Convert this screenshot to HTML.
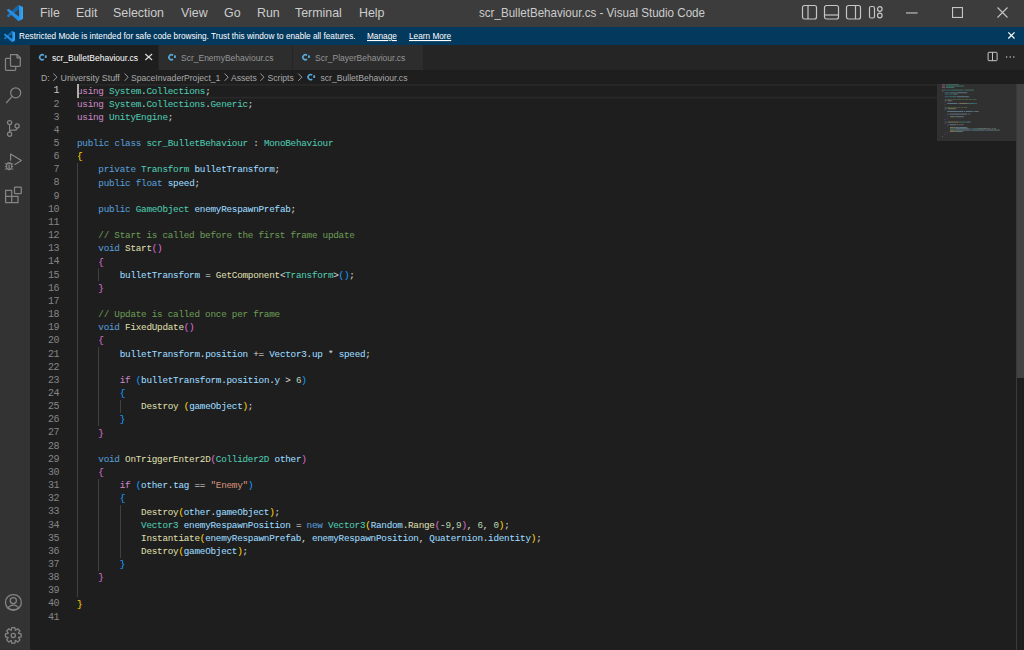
<!DOCTYPE html>
<html><head><meta charset="utf-8">
<style>
*{margin:0;padding:0;box-sizing:border-box}
html,body{width:1024px;height:650px;overflow:hidden;background:#1e1e1e;font-family:"Liberation Sans",sans-serif;position:relative}
.abs{position:absolute}
#title{left:0;top:0;width:1024px;height:27px;background:#3c3c3c}
.menu{position:absolute;top:5px;font-size:12.4px;color:#cccccc;white-space:nowrap;line-height:16px}
#banner{left:0;top:27px;width:1024px;height:18px;background:#04395e}
.btxt{position:absolute;top:29.2px;font-size:8.25px;line-height:14px;color:#ffffff;white-space:nowrap;transform-origin:0 0;transform:scaleY(1.1)}
.btxt u{text-decoration:underline}
#act{left:0;top:45px;width:30px;height:605px;background:#333333}
#tabs{left:30px;top:45px;width:994px;height:25px;background:#252526}
.tab{position:absolute;top:45px;height:25px;background:#2d2d2d}
.tabtxt{position:absolute;top:52px;font-size:8.5px;line-height:13px;white-space:nowrap}
.bc{position:absolute;top:72px;font-size:8.6px;line-height:13px;color:#a9a9a9;white-space:nowrap}
#code{-webkit-text-stroke:0.07px;position:absolute;left:77px;top:84.5px;font-family:"Liberation Mono",monospace;font-size:9.3px;letter-spacing:-0.241px;line-height:13.155px;white-space:pre;color:#d4d4d4}
.ln{position:absolute;left:30px;width:28.8px;text-align:right;font-family:"Liberation Mono",monospace;font-size:10px;letter-spacing:-0.66px;line-height:13.155px;color:#858585;white-space:pre}
.ln.act{color:#c6c6c6}
.k{color:#569cd6}.c{color:#c586c0}.t{color:#4ec9b0}.v{color:#9cdcfe}.f{color:#dcdcaa}.m{color:#6a9955}.s{color:#ce9178}.n{color:#b5cea8}
.b1{color:#ffd700}.b2{color:#da70d6}.b3{color:#179fff}
.guide{position:absolute;width:1px;background:#404040}
svg{position:absolute;overflow:visible}
.ai{fill:none;stroke:#858585;stroke-width:1.25;stroke-linejoin:round}
</style></head><body>
<div id="title" class="abs"></div>
<svg style="left:7px;top:4.6px" width="16" height="16" viewBox="0 0 100 100"><defs><linearGradient id="lg" x1="0" y1="0" x2="1" y2="0"><stop offset="0" stop-color="#2a8ee0"/><stop offset="0.7" stop-color="#1f8ee6"/><stop offset="1" stop-color="#3aa6f2"/></linearGradient></defs><path fill="url(#lg)" d="M96.46 10.8L75.86.87a6.23 6.23 0 0 0-7.1 1.2L29.35 38.04 12.19 25.01a4.16 4.16 0 0 0-5.32.24L1.36 30.26a4.16 4.16 0 0 0 0 6.16L16.25 50 1.36 63.58a4.16 4.16 0 0 0 0 6.16l5.51 5.01a4.16 4.16 0 0 0 5.32.24l17.16-13.03 39.41 35.97a6.23 6.23 0 0 0 7.1 1.2l20.6-9.92a6.25 6.25 0 0 0 3.54-5.63V16.43a6.25 6.25 0 0 0-3.54-5.63zM75.01 72.7L45.11 50l29.9-22.7v45.4z"/><path fill="#000" opacity="0.28" d="M29.35 38.04L68.76 2.07L75.01 0.9V27.3L45.11 50z"/><path fill="#000" opacity="0.18" d="M16.25 50L29.35 61.96L12.19 74.99L1.36 69.74V63.58z"/></svg>
<div class="menu" style="left:40px">File</div>
<div class="menu" style="left:76px">Edit</div>
<div class="menu" style="left:113px">Selection</div>
<div class="menu" style="left:181px">View</div>
<div class="menu" style="left:224px">Go</div>
<div class="menu" style="left:257px">Run</div>
<div class="menu" style="left:295px">Terminal</div>
<div class="menu" style="left:359px">Help</div>
<div class="menu" style="left:479px;font-size:11.6px;transform:scaleY(1.18);transform-origin:0 11.75px">scr_BulletBehaviour.cs - Visual Studio Code</div>
<svg style="left:802px;top:5.2px" width="15" height="15" viewBox="0 0 15 15" fill="none" stroke="#c5c5c5" stroke-width="1.2"><rect x="0.5" y="0.5" width="14" height="13.5" rx="2"/><line x1="6" y1="0.5" x2="6" y2="14"/></svg>
<svg style="left:824px;top:5.2px" width="15" height="15" viewBox="0 0 15 15" fill="none" stroke="#c5c5c5" stroke-width="1.2"><rect x="0.5" y="0.5" width="14" height="13.5" rx="2"/><line x1="0.5" y1="10" x2="14.5" y2="10"/></svg>
<svg style="left:846px;top:5.2px" width="15" height="15" viewBox="0 0 15 15" fill="none" stroke="#c5c5c5" stroke-width="1.2"><rect x="0.5" y="0.5" width="14" height="13.5" rx="2"/><line x1="9.5" y1="0.5" x2="9.5" y2="14"/></svg>
<svg style="left:869px;top:6.3px" width="15" height="13" viewBox="0 0 15 13" fill="none" stroke="#c5c5c5" stroke-width="1.2"><rect x="0.5" y="0.5" width="5" height="11.5" rx="1.5"/><circle cx="10.8" cy="3" r="2.3"/><circle cx="10.8" cy="9.5" r="2.3"/></svg>
<svg style="left:906px;top:12.4px" width="12" height="2" viewBox="0 0 12 2"><rect x="0" y="0.4" width="11.6" height="1.1" fill="#c5c5c5"/></svg>
<svg style="left:952px;top:7px" width="11" height="11" viewBox="0 0 11 11" fill="none" stroke="#c5c5c5" stroke-width="1.1"><rect x="0.55" y="0.55" width="9.9" height="9.9"/></svg>
<svg style="left:997.3px;top:7px" width="11" height="11" viewBox="0 0 11 11" fill="none" stroke="#c5c5c5" stroke-width="1.1"><path d="M0.5 0.5L10.5 10.5M10.5 0.5L0.5 10.5"/></svg>

<div id="banner" class="abs"></div>
<svg style="left:4px;top:31px" width="11" height="11" viewBox="0 0 100 100"><path fill="url(#lg)" d="M96.46 10.8L75.86.87a6.23 6.23 0 0 0-7.1 1.2L29.35 38.04 12.19 25.01a4.16 4.16 0 0 0-5.32.24L1.36 30.26a4.16 4.16 0 0 0 0 6.16L16.25 50 1.36 63.58a4.16 4.16 0 0 0 0 6.16l5.51 5.01a4.16 4.16 0 0 0 5.32.24l17.16-13.03 39.41 35.97a6.23 6.23 0 0 0 7.1 1.2l20.6-9.92a6.25 6.25 0 0 0 3.54-5.63V16.43a6.25 6.25 0 0 0-3.54-5.63zM75.01 72.7L45.11 50l29.9-22.7v45.4z"/><path fill="#000" opacity="0.28" d="M29.35 38.04L68.76 2.07L75.01 0.9V27.3L45.11 50z"/><path fill="#000" opacity="0.18" d="M16.25 50L29.35 61.96L12.19 74.99L1.36 69.74V63.58z"/></svg>
<div class="btxt" style="left:19px">Restricted Mode is intended for safe code browsing. Trust this window to enable all features.</div>
<div class="btxt" style="left:367px"><u>Manage</u></div>
<div class="btxt" style="left:409px"><u>Learn More</u></div>
<svg style="left:1008.3px;top:32.2px" width="7" height="7" viewBox="0 0 7 7" fill="none" stroke="#ffffff" stroke-width="1.15"><path d="M0.3 0.3L6.5 6.5M6.5 0.3L0.3 6.5"/></svg>

<div id="act" class="abs"></div>
<!-- explorer -->
<svg style="left:0;top:0" width="30" height="650" class="ai">
<path d="M10.5 54.5h6.5l3.3 3.3v7.7a0.8 0.8 0 0 1-0.8 0.8h-8.2a0.8 0.8 0 0 1-0.8-0.8z"/>
<path d="M17 54.5v3.3h3.3"/>
<path d="M10.7 58.3h-4.4a0.8 0.8 0 0 0-0.8 0.8v10.4a0.8 0.8 0 0 0 0.8 0.8h8.6a0.8 0.8 0 0 0 0.8-0.8v-3.2"/>
<!-- search -->
<circle cx="15.7" cy="92.8" r="5"/>
<path d="M12.2 96.4L6.2 103"/>
<!-- scm -->
<circle cx="9.6" cy="122.6" r="2.1"/>
<circle cx="17.1" cy="125.9" r="2.1"/>
<circle cx="9.6" cy="134.2" r="2.1"/>
<path d="M9.6 124.7v7.4"/>
<path d="M17.1 128c0 1.5-1 2.2-2.4 2.2h-2.6c-1.6 0-2.5 0.8-2.5 2"/>
<!-- run debug -->
<path d="M10.6 160.8V154L21.4 160.5L14.5 164.8"/>
<ellipse cx="9.1" cy="166.2" rx="2.6" ry="3.4"/>
<path d="M6.6 163.3h5M4.9 163.6l1.7 0.8M13.3 163.6l-1.7 0.8M4.9 166.6h1.6M11.7 166.6h1.6M4.9 169.5l1.9-1.1M13.3 169.5l-1.9-1.1" stroke-width="1"/>
<path d="M9.1 164.5v4.5" stroke-width="1.3"/>
<!-- extensions -->
<path d="M5.6 190.3h6.1v6.1h6.3v6.2h-12.4z"/>
<path d="M5.6 196.4h6.1v6.2"/>
<rect x="14.5" y="187.2" width="6.8" height="6.3" rx="0.8"/>
<!-- account -->
<circle cx="13.4" cy="602.4" r="7.9"/>
<circle cx="13.3" cy="600.6" r="3.1"/>
<path d="M7.9 608.2c1.2-2.2 3.1-3.2 5.4-3.2s4.3 1 5.4 3.2c-1.5 0.9-3.4 1.3-5.4 1.3s-3.9-0.4-5.4-1.3z"/>
<!-- gear -->
<circle cx="13.3" cy="635.4" r="2.1"/>
<path d="M18.54 633.43 L21.14 633.81 L21.14 636.99 L18.54 637.37 L18.40 637.71 L19.97 639.82 L17.72 642.07 L15.61 640.50 L15.27 640.64 L14.89 643.24 L11.71 643.24 L11.33 640.64 L10.99 640.50 L8.88 642.07 L6.63 639.82 L8.20 637.71 L8.06 637.37 L5.46 636.99 L5.46 633.81 L8.06 633.43 L8.20 633.09 L6.63 630.98 L8.88 628.73 L10.99 630.30 L11.33 630.16 L11.71 627.56 L14.89 627.56 L15.27 630.16 L15.61 630.30 L17.72 628.73 L19.97 630.98 L18.40 633.09z"/>
</svg>

<div id="tabs" class="abs"></div>
<div class="tab" style="left:30px;width:128px;background:#1e1e1e"></div>
<div class="tab" style="left:159px;width:133px"></div>
<div class="tab" style="left:293px;width:130px"></div>
<svg style="left:0;top:0" width="1024" height="90">
<g fill="none" stroke="#55a8d8" stroke-width="1.6"><path d="M43.81 55.33A2.5 2.5 0 1 0 43.81 59.17"/><path d="M173.01 55.28A2.5 2.5 0 1 0 173.01 59.12"/><path d="M307.01 55.28A2.5 2.5 0 1 0 307.01 59.12"/><path d="M312.21 75.18A2.5 2.5 0 1 0 312.21 79.02"/></g><g fill="#55a8d8"><rect x="44.80" y="55.35" width="1.9" height="2.7" rx="0.4"/><rect x="174.00" y="55.30" width="1.9" height="2.7" rx="0.4"/><rect x="308.00" y="55.30" width="1.9" height="2.7" rx="0.4"/><rect x="313.20" y="75.20" width="1.9" height="2.7" rx="0.4"/></g>
<path d="M145.3 54l6.8 6M152.1 54l-6.8 6" stroke="#dadada" stroke-width="1.15" fill="none"/>
<g fill="none" stroke="#a9a9a9" stroke-width="0.9"><path d="M53.4 73.6l3.6 3.6-3.6 3.6"/><path d="M124.6 73.6l3.6 3.6-3.6 3.6"/><path d="M224.6 73.6l3.6 3.6-3.6 3.6"/><path d="M260.4 73.6l3.6 3.6-3.6 3.6"/><path d="M298.3 73.6l3.6 3.6-3.6 3.6"/></g>
<g fill="none" stroke="#c5c5c5" stroke-width="1">
<rect x="988.1" y="52.3" width="9" height="8.4" rx="0.7"/>
<path d="M992.5 52.2v8.6"/>
</g>
<g fill="#c5c5c5">
<circle cx="1006.6" cy="57" r="0.75"/><circle cx="1010.2" cy="57" r="0.75"/><circle cx="1013.8" cy="57" r="0.75"/>
</g>
</svg>
<div class="tabtxt" style="left:52px;color:#ffffff">scr_BulletBehaviour.cs</div>
<div class="tabtxt" style="left:181px;color:#969696">Scr_EnemyBehaviour.cs</div>
<div class="tabtxt" style="left:315px;color:#969696">Scr_PlayerBehaviour.cs</div>
<div class="bc" style="left:41px">D:</div>
<div class="bc" style="left:60.5px;font-size:8.85px">University Stuff</div>
<div class="bc" style="left:131px">SpaceInvaderProject_1</div>
<div class="bc" style="left:231px">Assets</div>
<div class="bc" style="left:267.5px">Scripts</div>
<div class="bc" style="left:320.5px">scr_BulletBehaviour.cs</div>

<!-- current line -->
<svg style="left:0;top:0" width="1024" height="110"><rect x="77" y="84" width="860" height="1.8" fill="#282828"/><rect x="77" y="96.7" width="860" height="1.8" fill="#282828"/></svg>
<div class="guide" style="left:77.00px;top:162.93px;height:434.11px"></div>
<div class="guide" style="left:98.36px;top:268.17px;height:13.16px"></div>
<div class="guide" style="left:98.36px;top:347.10px;height:78.93px"></div>
<div class="guide" style="left:119.72px;top:399.72px;height:13.16px"></div>
<div class="guide" style="left:98.36px;top:478.65px;height:92.08px"></div>
<div class="guide" style="left:119.72px;top:504.96px;height:52.62px"></div>
<div class="ln act" style="top:84.40px">1</div>
<div class="ln" style="top:97.56px">2</div>
<div class="ln" style="top:110.71px">3</div>
<div class="ln" style="top:123.87px">4</div>
<div class="ln" style="top:137.02px">5</div>
<div class="ln" style="top:150.18px">6</div>
<div class="ln" style="top:163.33px">7</div>
<div class="ln" style="top:176.49px">8</div>
<div class="ln" style="top:189.64px">9</div>
<div class="ln" style="top:202.80px">10</div>
<div class="ln" style="top:215.95px">11</div>
<div class="ln" style="top:229.10px">12</div>
<div class="ln" style="top:242.26px">13</div>
<div class="ln" style="top:255.41px">14</div>
<div class="ln" style="top:268.57px">15</div>
<div class="ln" style="top:281.73px">16</div>
<div class="ln" style="top:294.88px">17</div>
<div class="ln" style="top:308.03px">18</div>
<div class="ln" style="top:321.19px">19</div>
<div class="ln" style="top:334.35px">20</div>
<div class="ln" style="top:347.50px">21</div>
<div class="ln" style="top:360.65px">22</div>
<div class="ln" style="top:373.81px">23</div>
<div class="ln" style="top:386.97px">24</div>
<div class="ln" style="top:400.12px">25</div>
<div class="ln" style="top:413.27px">26</div>
<div class="ln" style="top:426.43px">27</div>
<div class="ln" style="top:439.59px">28</div>
<div class="ln" style="top:452.74px">29</div>
<div class="ln" style="top:465.89px">30</div>
<div class="ln" style="top:479.05px">31</div>
<div class="ln" style="top:492.21px">32</div>
<div class="ln" style="top:505.36px">33</div>
<div class="ln" style="top:518.51px">34</div>
<div class="ln" style="top:531.67px">35</div>
<div class="ln" style="top:544.82px">36</div>
<div class="ln" style="top:557.98px">37</div>
<div class="ln" style="top:571.13px">38</div>
<div class="ln" style="top:584.29px">39</div>
<div class="ln" style="top:597.44px">40</div>
<div class="ln" style="top:610.60px">41</div>
<div id="code"><span class="c">using</span> <span class="t">System</span>.<span class="t">Collections</span>;
<span class="c">using</span> <span class="t">System</span>.<span class="t">Collections</span>.<span class="t">Generic</span>;
<span class="c">using</span> <span class="t">UnityEngine</span>;

<span class="k">public</span> <span class="k">class</span> <span class="t">scr_BulletBehaviour</span> : <span class="t">MonoBehaviour</span>
<span class="b1">{</span>
    <span class="k">private</span> <span class="t">Transform</span> <span class="v">bulletTransform</span>;
    <span class="k">public</span> <span class="k">float</span> <span class="v">speed</span>;

    <span class="k">public</span> <span class="t">GameObject</span> <span class="v">enemyRespawnPrefab</span>;

    <span class="m">// Start is called before the first frame update</span>
    <span class="k">void</span> <span class="f">Start</span><span class="b2">()</span>
    <span class="b2">{</span>
        <span class="v">bulletTransform</span> = <span class="f">GetComponent</span>&lt;<span class="t">Transform</span>&gt;<span class="b3">()</span>;
    <span class="b2">}</span>

    <span class="m">// Update is called once per frame</span>
    <span class="k">void</span> <span class="f">FixedUpdate</span><span class="b2">()</span>
    <span class="b2">{</span>
        <span class="v">bulletTransform</span>.<span class="v">position</span> += <span class="v">Vector3</span>.<span class="v">up</span> * <span class="v">speed</span>;

        <span class="c">if</span> <span class="b3">(</span><span class="v">bulletTransform</span>.<span class="v">position</span>.<span class="v">y</span> &gt; <span class="n">6</span><span class="b3">)</span>
        <span class="b3">{</span>
            <span class="f">Destroy</span> <span class="b1">(</span><span class="v">gameObject</span><span class="b1">)</span>;
        <span class="b3">}</span>
    <span class="b2">}</span>

    <span class="k">void</span> <span class="f">OnTriggerEnter2D</span><span class="b2">(</span><span class="t">Collider2D</span> <span class="v">other</span><span class="b2">)</span>
    <span class="b2">{</span>
        <span class="c">if</span> <span class="b3">(</span><span class="v">other</span>.<span class="v">tag</span> == <span class="s">&quot;Enemy&quot;</span><span class="b3">)</span>
        <span class="b3">{</span>
            <span class="f">Destroy</span><span class="b1">(</span><span class="v">other</span>.<span class="v">gameObject</span><span class="b1">)</span>;
            <span class="t">Vector3</span> <span class="v">enemyRespawnPosition</span> = <span class="k">new</span> <span class="t">Vector3</span><span class="b1">(</span><span class="v">Random</span>.<span class="f">Range</span><span class="b2">(</span><span class="n">-9</span>,<span class="n">9</span><span class="b2">)</span>, <span class="n">6</span>, <span class="n">0</span><span class="b1">)</span>;
            <span class="f">Instantiate</span><span class="b1">(</span><span class="v">enemyRespawnPrefab</span>, <span class="v">enemyRespawnPosition</span>, <span class="v">Quaternion</span>.<span class="v">identity</span><span class="b1">)</span>;
            <span class="f">Destroy</span><span class="b1">(</span><span class="v">gameObject</span><span class="b1">)</span>;
        <span class="b3">}</span>
    <span class="b2">}</span>

<span class="b1">}</span>
</div>
<div class="abs" style="left:77px;top:84px;width:2px;height:13.5px;background:#aeafad"></div>
<!-- minimap -->
<div class="abs" style="left:937px;top:84px;width:79px;height:57px;background:rgba(121,121,121,0.2)"></div>
<svg style="left:937px;top:84px;opacity:0.45" width="79" height="60"><rect x="5.00" y="0.30" width="3.33" height="0.9" fill="#c586c0"/><rect x="8.99" y="0.30" width="3.99" height="0.9" fill="#4ec9b0"/><rect x="12.98" y="0.30" width="0.67" height="0.9" fill="#d4d4d4"/><rect x="13.64" y="0.30" width="7.32" height="0.9" fill="#4ec9b0"/><rect x="20.96" y="0.30" width="0.67" height="0.9" fill="#d4d4d4"/><rect x="5.00" y="1.63" width="3.33" height="0.9" fill="#c586c0"/><rect x="8.99" y="1.63" width="3.99" height="0.9" fill="#4ec9b0"/><rect x="12.98" y="1.63" width="0.67" height="0.9" fill="#d4d4d4"/><rect x="13.64" y="1.63" width="7.32" height="0.9" fill="#4ec9b0"/><rect x="20.96" y="1.63" width="0.67" height="0.9" fill="#d4d4d4"/><rect x="21.62" y="1.63" width="4.66" height="0.9" fill="#4ec9b0"/><rect x="26.28" y="1.63" width="0.67" height="0.9" fill="#d4d4d4"/><rect x="5.00" y="2.97" width="3.33" height="0.9" fill="#c586c0"/><rect x="8.99" y="2.97" width="7.32" height="0.9" fill="#4ec9b0"/><rect x="16.30" y="2.97" width="0.67" height="0.9" fill="#d4d4d4"/><rect x="5.00" y="5.63" width="3.99" height="0.9" fill="#569cd6"/><rect x="9.66" y="5.63" width="3.33" height="0.9" fill="#569cd6"/><rect x="13.64" y="5.63" width="12.64" height="0.9" fill="#4ec9b0"/><rect x="26.95" y="5.63" width="0.67" height="0.9" fill="#d4d4d4"/><rect x="28.28" y="5.63" width="8.64" height="0.9" fill="#4ec9b0"/><rect x="5.00" y="6.96" width="0.67" height="0.9" fill="#ffd700"/><rect x="7.66" y="8.30" width="4.66" height="0.9" fill="#569cd6"/><rect x="12.98" y="8.30" width="5.99" height="0.9" fill="#4ec9b0"/><rect x="19.63" y="8.30" width="9.98" height="0.9" fill="#9cdcfe"/><rect x="29.61" y="8.30" width="0.67" height="0.9" fill="#d4d4d4"/><rect x="7.66" y="9.63" width="3.99" height="0.9" fill="#569cd6"/><rect x="12.32" y="9.63" width="3.33" height="0.9" fill="#569cd6"/><rect x="16.30" y="9.63" width="3.33" height="0.9" fill="#9cdcfe"/><rect x="19.63" y="9.63" width="0.67" height="0.9" fill="#d4d4d4"/><rect x="7.66" y="12.30" width="3.99" height="0.9" fill="#569cd6"/><rect x="12.32" y="12.30" width="6.65" height="0.9" fill="#4ec9b0"/><rect x="19.63" y="12.30" width="11.97" height="0.9" fill="#9cdcfe"/><rect x="31.60" y="12.30" width="0.67" height="0.9" fill="#d4d4d4"/><rect x="7.66" y="14.96" width="1.33" height="0.9" fill="#6a9955"/><rect x="9.66" y="14.96" width="3.33" height="0.9" fill="#6a9955"/><rect x="13.64" y="14.96" width="1.33" height="0.9" fill="#6a9955"/><rect x="15.64" y="14.96" width="3.99" height="0.9" fill="#6a9955"/><rect x="20.30" y="14.96" width="3.99" height="0.9" fill="#6a9955"/><rect x="24.95" y="14.96" width="2.00" height="0.9" fill="#6a9955"/><rect x="27.61" y="14.96" width="3.33" height="0.9" fill="#6a9955"/><rect x="31.60" y="14.96" width="3.33" height="0.9" fill="#6a9955"/><rect x="35.59" y="14.96" width="3.99" height="0.9" fill="#6a9955"/><rect x="7.66" y="16.30" width="2.66" height="0.9" fill="#569cd6"/><rect x="10.98" y="16.30" width="3.33" height="0.9" fill="#dcdcaa"/><rect x="14.31" y="16.30" width="1.33" height="0.9" fill="#da70d6"/><rect x="7.66" y="17.63" width="0.67" height="0.9" fill="#da70d6"/><rect x="10.32" y="18.96" width="9.98" height="0.9" fill="#9cdcfe"/><rect x="20.96" y="18.96" width="0.67" height="0.9" fill="#d4d4d4"/><rect x="22.29" y="18.96" width="7.98" height="0.9" fill="#dcdcaa"/><rect x="30.27" y="18.96" width="0.67" height="0.9" fill="#d4d4d4"/><rect x="30.94" y="18.96" width="5.99" height="0.9" fill="#4ec9b0"/><rect x="36.92" y="18.96" width="0.67" height="0.9" fill="#d4d4d4"/><rect x="37.59" y="18.96" width="1.33" height="0.9" fill="#179fff"/><rect x="38.91" y="18.96" width="0.67" height="0.9" fill="#d4d4d4"/><rect x="7.66" y="20.29" width="0.67" height="0.9" fill="#da70d6"/><rect x="7.66" y="22.96" width="1.33" height="0.9" fill="#6a9955"/><rect x="9.66" y="22.96" width="3.99" height="0.9" fill="#6a9955"/><rect x="14.31" y="22.96" width="1.33" height="0.9" fill="#6a9955"/><rect x="16.30" y="22.96" width="3.99" height="0.9" fill="#6a9955"/><rect x="20.96" y="22.96" width="2.66" height="0.9" fill="#6a9955"/><rect x="24.29" y="22.96" width="2.00" height="0.9" fill="#6a9955"/><rect x="26.95" y="22.96" width="3.33" height="0.9" fill="#6a9955"/><rect x="7.66" y="24.29" width="2.66" height="0.9" fill="#569cd6"/><rect x="10.98" y="24.29" width="7.32" height="0.9" fill="#dcdcaa"/><rect x="18.30" y="24.29" width="1.33" height="0.9" fill="#da70d6"/><rect x="7.66" y="25.63" width="0.67" height="0.9" fill="#da70d6"/><rect x="10.32" y="26.96" width="9.98" height="0.9" fill="#9cdcfe"/><rect x="20.30" y="26.96" width="0.67" height="0.9" fill="#d4d4d4"/><rect x="20.96" y="26.96" width="5.32" height="0.9" fill="#9cdcfe"/><rect x="26.95" y="26.96" width="1.33" height="0.9" fill="#d4d4d4"/><rect x="28.94" y="26.96" width="4.66" height="0.9" fill="#9cdcfe"/><rect x="33.59" y="26.96" width="0.67" height="0.9" fill="#d4d4d4"/><rect x="34.26" y="26.96" width="1.33" height="0.9" fill="#9cdcfe"/><rect x="36.26" y="26.96" width="0.67" height="0.9" fill="#d4d4d4"/><rect x="37.59" y="26.96" width="3.33" height="0.9" fill="#9cdcfe"/><rect x="40.91" y="26.96" width="0.67" height="0.9" fill="#d4d4d4"/><rect x="10.32" y="29.63" width="1.33" height="0.9" fill="#c586c0"/><rect x="12.32" y="29.63" width="0.67" height="0.9" fill="#179fff"/><rect x="12.98" y="29.63" width="9.98" height="0.9" fill="#9cdcfe"/><rect x="22.96" y="29.63" width="0.67" height="0.9" fill="#d4d4d4"/><rect x="23.62" y="29.63" width="5.32" height="0.9" fill="#9cdcfe"/><rect x="28.94" y="29.63" width="0.67" height="0.9" fill="#d4d4d4"/><rect x="29.61" y="29.63" width="0.67" height="0.9" fill="#9cdcfe"/><rect x="30.94" y="29.63" width="0.67" height="0.9" fill="#d4d4d4"/><rect x="32.27" y="29.63" width="0.67" height="0.9" fill="#b5cea8"/><rect x="32.93" y="29.63" width="0.67" height="0.9" fill="#179fff"/><rect x="10.32" y="30.96" width="0.67" height="0.9" fill="#179fff"/><rect x="12.98" y="32.29" width="4.66" height="0.9" fill="#dcdcaa"/><rect x="18.30" y="32.29" width="0.67" height="0.9" fill="#ffd700"/><rect x="18.96" y="32.29" width="6.65" height="0.9" fill="#9cdcfe"/><rect x="25.62" y="32.29" width="0.67" height="0.9" fill="#ffd700"/><rect x="26.28" y="32.29" width="0.67" height="0.9" fill="#d4d4d4"/><rect x="10.32" y="33.62" width="0.67" height="0.9" fill="#179fff"/><rect x="7.66" y="34.96" width="0.67" height="0.9" fill="#da70d6"/><rect x="7.66" y="37.62" width="2.66" height="0.9" fill="#569cd6"/><rect x="10.98" y="37.62" width="10.64" height="0.9" fill="#dcdcaa"/><rect x="21.62" y="37.62" width="0.67" height="0.9" fill="#da70d6"/><rect x="22.29" y="37.62" width="6.65" height="0.9" fill="#4ec9b0"/><rect x="29.61" y="37.62" width="3.33" height="0.9" fill="#9cdcfe"/><rect x="32.93" y="37.62" width="0.67" height="0.9" fill="#da70d6"/><rect x="7.66" y="38.96" width="0.67" height="0.9" fill="#da70d6"/><rect x="10.32" y="40.29" width="1.33" height="0.9" fill="#c586c0"/><rect x="12.32" y="40.29" width="0.67" height="0.9" fill="#179fff"/><rect x="12.98" y="40.29" width="3.33" height="0.9" fill="#9cdcfe"/><rect x="16.30" y="40.29" width="0.67" height="0.9" fill="#d4d4d4"/><rect x="16.97" y="40.29" width="2.00" height="0.9" fill="#9cdcfe"/><rect x="19.63" y="40.29" width="1.33" height="0.9" fill="#d4d4d4"/><rect x="21.62" y="40.29" width="4.66" height="0.9" fill="#ce9178"/><rect x="26.28" y="40.29" width="0.67" height="0.9" fill="#179fff"/><rect x="10.32" y="41.62" width="0.67" height="0.9" fill="#179fff"/><rect x="12.98" y="42.96" width="4.66" height="0.9" fill="#dcdcaa"/><rect x="17.64" y="42.96" width="0.67" height="0.9" fill="#ffd700"/><rect x="18.30" y="42.96" width="3.33" height="0.9" fill="#9cdcfe"/><rect x="21.62" y="42.96" width="0.67" height="0.9" fill="#d4d4d4"/><rect x="22.29" y="42.96" width="6.65" height="0.9" fill="#9cdcfe"/><rect x="28.94" y="42.96" width="0.67" height="0.9" fill="#ffd700"/><rect x="29.61" y="42.96" width="0.67" height="0.9" fill="#d4d4d4"/><rect x="12.98" y="44.29" width="4.66" height="0.9" fill="#4ec9b0"/><rect x="18.30" y="44.29" width="13.30" height="0.9" fill="#9cdcfe"/><rect x="32.27" y="44.29" width="0.67" height="0.9" fill="#d4d4d4"/><rect x="33.59" y="44.29" width="2.00" height="0.9" fill="#569cd6"/><rect x="36.26" y="44.29" width="4.66" height="0.9" fill="#4ec9b0"/><rect x="40.91" y="44.29" width="0.67" height="0.9" fill="#ffd700"/><rect x="41.58" y="44.29" width="3.99" height="0.9" fill="#9cdcfe"/><rect x="45.57" y="44.29" width="0.67" height="0.9" fill="#d4d4d4"/><rect x="46.23" y="44.29" width="3.33" height="0.9" fill="#dcdcaa"/><rect x="49.55" y="44.29" width="0.67" height="0.9" fill="#da70d6"/><rect x="50.22" y="44.29" width="1.33" height="0.9" fill="#b5cea8"/><rect x="51.55" y="44.29" width="0.67" height="0.9" fill="#d4d4d4"/><rect x="52.22" y="44.29" width="0.67" height="0.9" fill="#b5cea8"/><rect x="52.88" y="44.29" width="0.67" height="0.9" fill="#da70d6"/><rect x="53.55" y="44.29" width="0.67" height="0.9" fill="#d4d4d4"/><rect x="54.88" y="44.29" width="0.67" height="0.9" fill="#b5cea8"/><rect x="55.54" y="44.29" width="0.67" height="0.9" fill="#d4d4d4"/><rect x="56.87" y="44.29" width="0.67" height="0.9" fill="#b5cea8"/><rect x="57.54" y="44.29" width="0.67" height="0.9" fill="#ffd700"/><rect x="58.20" y="44.29" width="0.67" height="0.9" fill="#d4d4d4"/><rect x="12.98" y="45.62" width="7.32" height="0.9" fill="#dcdcaa"/><rect x="20.30" y="45.62" width="0.67" height="0.9" fill="#ffd700"/><rect x="20.96" y="45.62" width="11.97" height="0.9" fill="#9cdcfe"/><rect x="32.93" y="45.62" width="0.67" height="0.9" fill="#d4d4d4"/><rect x="34.26" y="45.62" width="13.30" height="0.9" fill="#9cdcfe"/><rect x="47.56" y="45.62" width="0.67" height="0.9" fill="#d4d4d4"/><rect x="48.89" y="45.62" width="6.65" height="0.9" fill="#9cdcfe"/><rect x="55.54" y="45.62" width="0.67" height="0.9" fill="#d4d4d4"/><rect x="56.21" y="45.62" width="5.32" height="0.9" fill="#9cdcfe"/><rect x="61.53" y="45.62" width="0.67" height="0.9" fill="#ffd700"/><rect x="62.19" y="45.62" width="0.67" height="0.9" fill="#d4d4d4"/><rect x="12.98" y="46.95" width="4.66" height="0.9" fill="#dcdcaa"/><rect x="17.64" y="46.95" width="0.67" height="0.9" fill="#ffd700"/><rect x="18.30" y="46.95" width="6.65" height="0.9" fill="#9cdcfe"/><rect x="24.95" y="46.95" width="0.67" height="0.9" fill="#ffd700"/><rect x="25.62" y="46.95" width="0.67" height="0.9" fill="#d4d4d4"/><rect x="10.32" y="48.29" width="0.67" height="0.9" fill="#179fff"/><rect x="7.66" y="49.62" width="0.67" height="0.9" fill="#da70d6"/><rect x="5.00" y="52.29" width="0.67" height="0.9" fill="#ffd700"/></svg>
<div class="abs" style="left:1016px;top:84px;width:1px;height:566px;background:rgba(127,127,127,0.3)"></div>
<div class="abs" style="left:1017px;top:84px;width:7px;height:294px;background:rgba(121,121,121,0.4)"></div>
</body></html>
